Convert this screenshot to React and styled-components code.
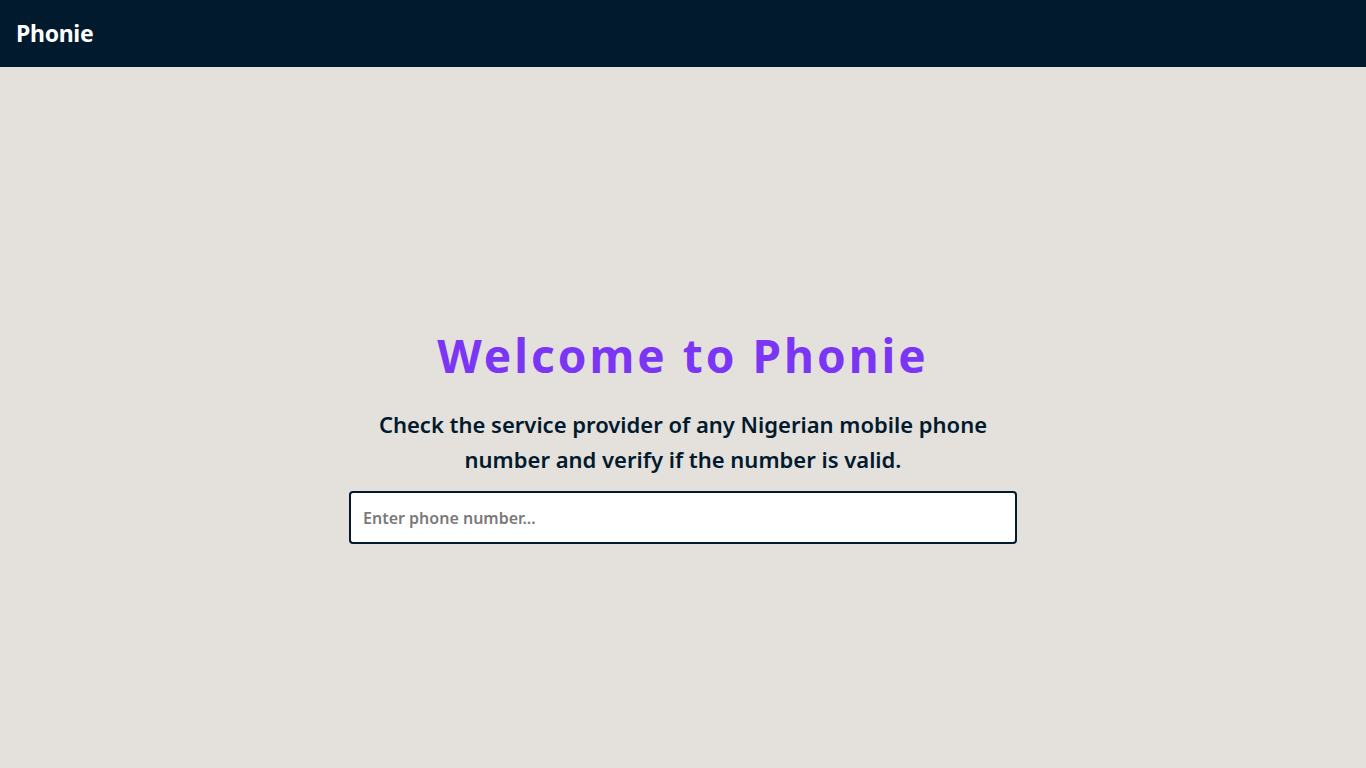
import React, { useState } from "react";
import styled, { createGlobalStyle } from "styled-components";

const GlobalStyle = createGlobalStyle`
  * {
    box-sizing: border-box;
  }
  body {
    margin: 0;
    font-family: "Noto Sans", "Open Sans", sans-serif;
    background-color: #e4e0db;
  }
`;

const Page = styled.div`
  min-height: 100vh;
  display: flex;
  flex-direction: column;
`;

const Header = styled.header`
  height: 67px;
  background-color: #011a2e;
  display: flex;
  align-items: center;
  padding: 0 16px 2px;
`;

const Logo = styled.div`
  color: #ffffff;
  font-size: 23px;
  font-weight: 700;
  letter-spacing: -0.3px;
`;

const Main = styled.main`
  flex: 1;
  display: flex;
  flex-direction: column;
  align-items: center;
  justify-content: center;
  padding-top: 35px;
`;

const Title = styled.h1`
  margin: 0 0 23px;
  color: #7b35f5;
  font-size: 46px;
  font-weight: 700;
  letter-spacing: 3px;
  line-height: 58px;
`;

const Subtitle = styled.p`
  margin: 0 0 14px;
  max-width: 660px;
  text-align: center;
  color: #011a2e;
  font-size: 22px;
  font-weight: 600;
  line-height: 35px;
`;

const Input = styled.input`
  width: 668px;
  height: 53px;
  padding: 0 12px;
  border: 2px solid #011a2e;
  border-radius: 4px;
  background: #ffffff;
  font-family: inherit;
  font-size: 16px;
  font-weight: 600;
  color: #011a2e;
  outline: none;

  &::placeholder {
    color: #7a7a7a;
  }
`;

const App = () => {
  const [phone, setPhone] = useState("");

  return (
    <Page>
      <GlobalStyle />
      <Header>
        <Logo>Phonie</Logo>
      </Header>
      <Main>
        <Title>Welcome to Phonie</Title>
        <Subtitle>
          Check the service provider of any Nigerian mobile phone number and
          verify if the number is valid.
        </Subtitle>
        <Input
          placeholder="Enter phone number..."
          value={phone}
          onChange={(e) => setPhone(e.target.value)}
        />
      </Main>
    </Page>
  );
};

export default App;
